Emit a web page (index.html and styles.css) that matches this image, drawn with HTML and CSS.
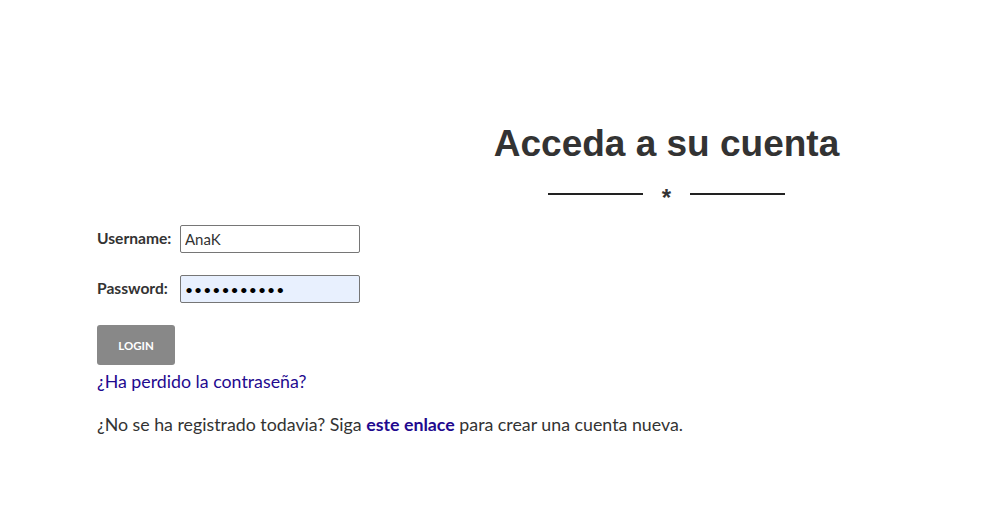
FILE: index.html
```html
<!DOCTYPE html>
<html lang="es">
<head>
  <meta charset="UTF-8" />
  <meta name="viewport" content="width=device-width, initial-scale=1.0"/>
  <title>Acceda a su cuenta</title>
  <link rel="stylesheet" href="styles.css">
</head>
<body>
  <div class="page">
    <div class="page-header">
      <h1>Acceda a su cuenta</h1>
      <div class="divider">
        <span class="rule"></span>
        <span class="star">*</span>
        <span class="rule"></span>
      </div>
    </div>

    <form class="login-form">
      <div class="form-row">
        <label for="username">Username:</label>
        <input type="text" id="username" value="AnaK" />
      </div>
      <div class="form-row">
        <label for="password">Password:</label>
        <input type="password" id="password" class="autofill" value="anakpasswrd" />
      </div>
      <button type="button" class="btn">LOGIN</button>
    </form>

    <a class="lost" href="#">¿Ha perdido la contraseña?</a>
    <p class="register">¿No se ha registrado todavia? Siga <a href="#">este enlace</a> para crear una cuenta nueva.</p>
  </div>
</body>
</html>
```

FILE: styles.css
```css
body {
  margin: 0;
  padding: 0;
  font-family: 'Lato', 'Open Sans', sans-serif;
  color: #333;
  background: #fff;
}

.page {
  padding: 121px 0 0 97px;
}

.page-header {
  margin-left: 229px;
  text-align: center;
}

.page-header h1 {
  margin: 0;
  font-family: 'Liberation Sans', Arial, sans-serif;
  font-size: 37px;
  font-weight: 700;
  line-height: 46px;
  color: #333;
}

.divider {
  display: flex;
  align-items: center;
  justify-content: center;
  gap: 19px;
  margin-top: 15px;
  height: 24px;
}

.divider .rule {
  width: 95px;
  height: 2px;
  background: #222;
}

.divider .star {
  font-family: 'Liberation Sans', Arial, sans-serif;
  font-size: 24px;
  font-weight: 700;
  color: #333;
  line-height: 24px;
  padding-top: 7px;
}

.login-form {
  margin-top: 19px;
}

.form-row {
  display: flex;
  align-items: center;
  margin-bottom: 22px;
}

.form-row label {
  width: 83px;
  padding-bottom: 3px;
  font-size: 15.6px;
  font-weight: 700;
  color: #333;
}

.form-row input {
  box-sizing: border-box;
  width: 180px;
  height: 28px;
  padding: 2px 4px;
  border: 1px solid #767676;
  border-radius: 2px;
  font-family: 'Lato', sans-serif;
  font-size: 15px;
  color: #333;
  outline: none;
}

.form-row input.autofill {
  background: #e8f0fe;
  color: #000;
  font-size: 14px;
  letter-spacing: 1px;
}

.btn {
  display: block;
  width: 78px;
  height: 40px;
  margin-top: 0;
  border: none;
  border-radius: 3px;
  background: #888;
  color: #fff;
  font-family: 'Lato', sans-serif;
  font-size: 11.5px;
  font-weight: 700;
  cursor: pointer;
}

.lost {
  display: inline-block;
  margin-top: 5px;
  font-size: 17.8px;
  color: #1f0a8f;
  text-decoration: none;
}

.register {
  margin: 21px 0 0;
  font-size: 17.8px;
}

.register a {
  color: #1f0a8f;
  font-weight: 700;
  text-decoration: none;
}
```
